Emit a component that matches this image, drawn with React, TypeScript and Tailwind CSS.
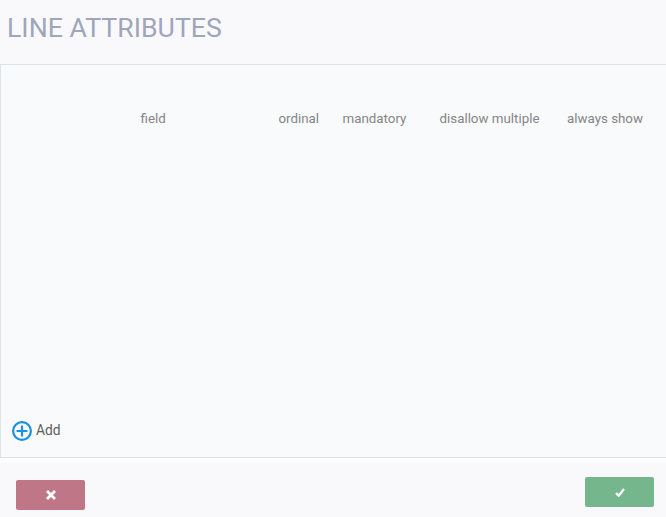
import React from "react";

const App: React.FC = () => {
  return (
    <div className="h-[517px] w-[666px] overflow-hidden bg-[#f9f9fc] font-['Roboto',sans-serif]">
      {/* Title */}
      <div className="h-[64px] pl-[8px] pt-[11px]">
        <h1 className="-ml-px text-[26.7px] leading-[34px] font-normal text-[#9ea6ba]">LINE ATTRIBUTES</h1>
      </div>

      {/* Panel */}
      <div className="flex h-[394px] flex-col justify-between border-t border-b border-l border-t-[#dde3ea] border-b-[#dfe0e6] border-l-[#dde3ea] bg-[#f9fafc]">
        <div className="flex pt-[45px] text-[13.33px] leading-[17px] text-[#858585]">
          <span className="ml-[139.5px] w-[138px]">field</span>
          <span className="w-[64px]">ordinal</span>
          <span className="w-[97px]">mandatory</span>
          <span className="w-[127.5px]">disallow multiple</span>
          <span>always show</span>
        </div>
        <div className="mb-[16px] ml-[11px] flex items-center gap-1">
          <svg width="20" height="20" viewBox="0 0 20 20" fill="none" stroke="#1b8fe0" strokeWidth="2.2">
            <circle cx="10" cy="10" r="8.9" />
            <path d="M10 4.5v11M4.5 10h11" />
          </svg>
          <span className="-mt-[2px] text-[13.8px] leading-[18px] text-[#606060]">Add</span>
        </div>
      </div>

      {/* Footer */}
      <div className="h-[5px] bg-[#fdfdfe]" />
      <div className="flex items-start justify-between pr-3 pl-4">
        <button className="mt-[17px] flex h-[30px] w-[69px] items-center justify-center rounded-[2px] bg-[#bf7788] text-white">
          <svg width="10" height="10" viewBox="0 0 10 10" fill="none" stroke="currentColor" strokeWidth="2.8">
            <path d="M1 1l8 8M9 1l-8 8" />
          </svg>
        </button>
        <button className="mt-[14px] flex h-[30px] w-[69px] items-center justify-center rounded-[2px] bg-[#75b68c] text-white">
          <svg width="10" height="9" viewBox="0 0 10 9" fill="none" stroke="currentColor" strokeWidth="2.3">
            <path d="M1 5l2.7 2.7L9 1" />
          </svg>
        </button>
      </div>
    </div>
  );
};

export default App;
